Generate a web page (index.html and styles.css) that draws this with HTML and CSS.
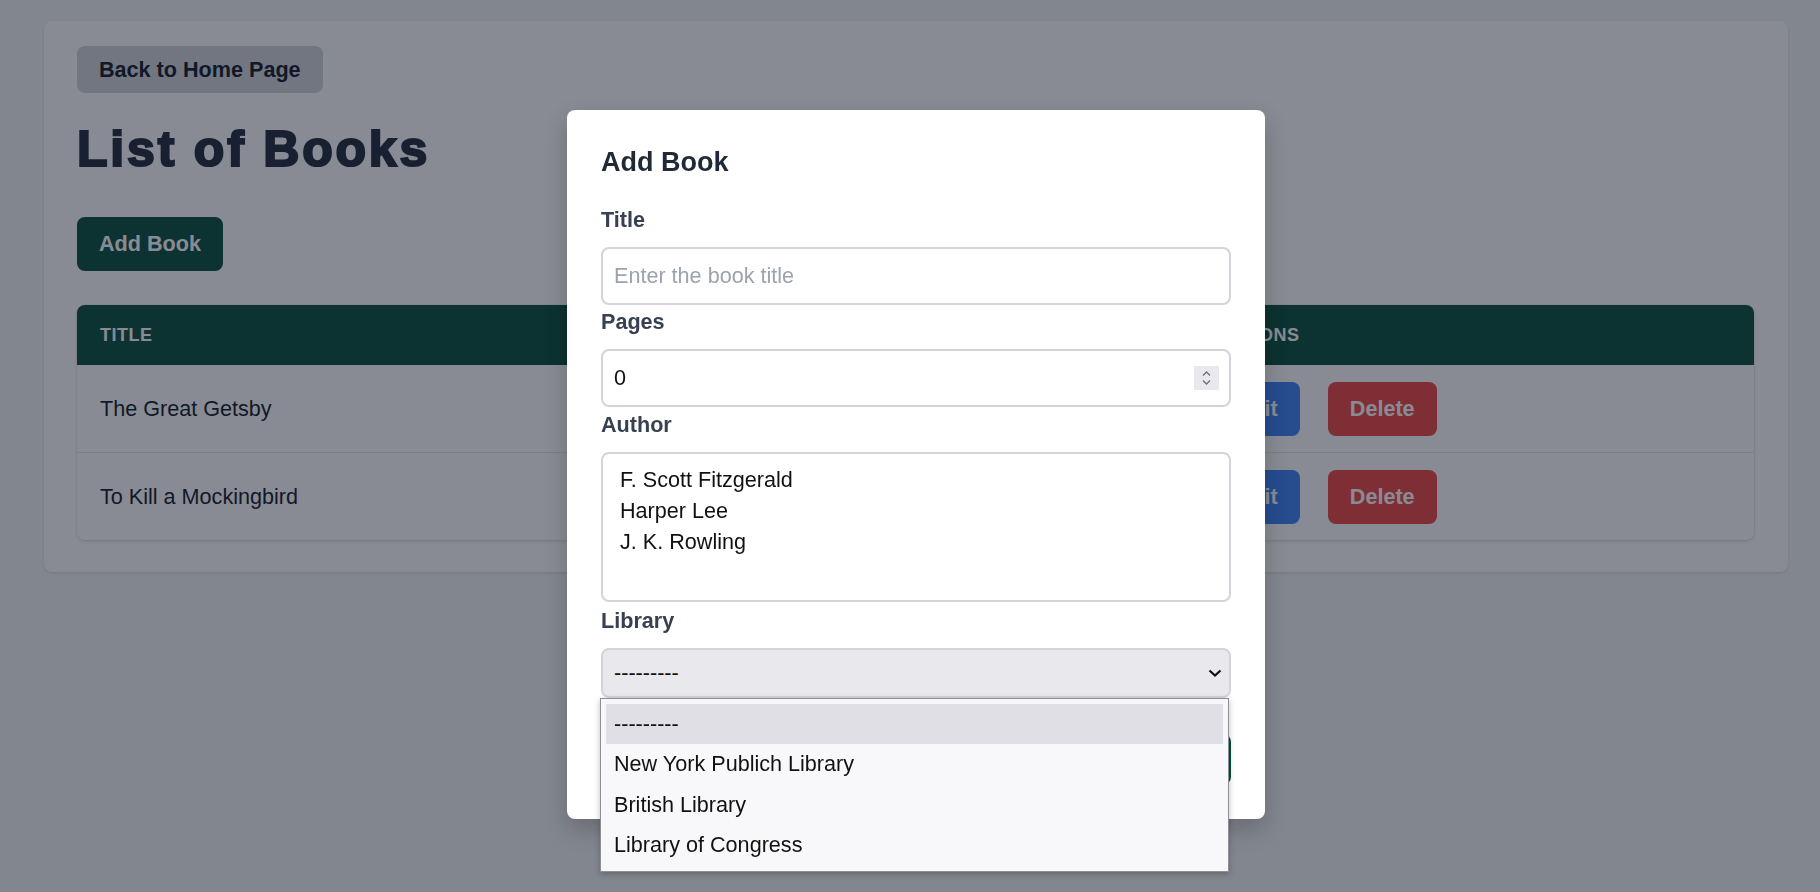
FILE: index.html
```html
<!DOCTYPE html>
<html lang="en">
<head>
<meta charset="utf-8">
<title>List of Books</title>
<link rel="stylesheet" href="styles.css">
</head>
<body>
<main class="page">
  <section class="card">
    <a class="btn btn-back" href="#">Back to Home Page</a>
    <h1 class="page-title">List of Books</h1>
    <button class="btn btn-add" type="button">Add Book</button>
    <div class="table-wrap">
      <table class="books">
        <colgroup>
          <col class="col-title"><col class="col-mid"><col>
        </colgroup>
        <thead>
          <tr><th>Title</th><th></th><th>Actions</th></tr>
        </thead>
        <tbody>
          <tr>
            <td>The Great Getsby</td><td></td>
            <td><div class="actions"><button class="btn btn-edit" type="button">Edit</button><button class="btn btn-delete" type="button">Delete</button></div></td>
          </tr>
          <tr>
            <td>To Kill a Mockingbird</td><td></td>
            <td><div class="actions"><button class="btn btn-edit" type="button">Edit</button><button class="btn btn-delete" type="button">Delete</button></div></td>
          </tr>
        </tbody>
      </table>
    </div>
  </section>
</main>

<div class="overlay">
  <div class="modal">
    <h2 class="modal-title">Add Book</h2>
    <form class="form">
      <label class="label" for="title">Title</label>
      <input class="input" id="title" type="text" placeholder="Enter the book title">

      <label class="label" for="pages">Pages</label>
      <div class="input input-number">
        <input class="number-field" id="pages" type="text" value="0">
        <span class="spinner">
          <svg width="25" height="24" viewBox="0 0 25 24"><polyline points="9,9.5 12.5,6 16,9.5" fill="none" stroke="#6b6f78" stroke-width="1.3"/><polyline points="9,14.5 12.5,18 16,14.5" fill="none" stroke="#6b6f78" stroke-width="1.3"/></svg>
        </span>
      </div>

      <label class="label">Author</label>
      <div class="listbox" role="listbox">
        <div class="listbox-option" role="option">F. Scott Fitzgerald</div>
        <div class="listbox-option" role="option">Harper Lee</div>
        <div class="listbox-option" role="option">J. K. Rowling</div>
      </div>

      <label class="label">Library</label>
      <div class="select-wrap">
        <div class="select">
          <span>---------</span>
          <svg width="14" height="8" viewBox="0 0 14 8"><polyline points="1.5,1.5 7,6.5 12.5,1.5" fill="none" stroke="#111" stroke-width="2.2"/></svg>
        </div>
        <ul class="dropdown" role="listbox">
          <li class="dropdown-option is-active">---------</li>
          <li class="dropdown-option">New York Publich Library</li>
          <li class="dropdown-option">British Library</li>
          <li class="dropdown-option">Library of Congress</li>
        </ul>
      </div>

      <button class="btn btn-submit" type="button"></button>
    </form>
  </div>
</div>
</body>
</html>
```

FILE: styles.css
```css
* { box-sizing: border-box; }

html, body { margin: 0; height: 100%; }

body {
  background: #f3f4f6;
  font-family: "Liberation Sans", Arial, sans-serif;
  font-size: 21.6px;
  color: #111827;
  padding: 21px 32px 0 44px;
}

.card {
  background: #fff;
  border-radius: 8px;
  box-shadow: 0 1px 3px rgba(0, 0, 0, 0.1);
  padding: 25px 34px 32px 33px;
  display: flex;
  flex-direction: column;
  align-items: flex-start;
}

.btn {
  display: inline-block;
  border: 0;
  border-radius: 8px;
  font: 700 21.6px/27px "Liberation Sans", Arial, sans-serif;
  padding: 10px 22px;
  text-decoration: none;
  cursor: pointer;
  color: #fff;
}

.btn-back { background: #d1d5db; color: #111827; }

.page-title {
  font-size: 50px;
  line-height: 60px;
  font-weight: 700;
  letter-spacing: 2.8px;
  color: #1e293b;
  -webkit-text-stroke: 2.2px #1e293b;
  margin: 26px 0 38px;
}

.btn-add {
  background: #064e3b;
  padding: 13px 22px;
  line-height: 28px;
}

.table-wrap {
  align-self: stretch;
  margin-top: 34px;
  border-radius: 8px;
  overflow: hidden;
  background: #fff;
  box-shadow: 0 0 0 1px rgba(0, 0, 0, 0.04), 0 2px 4px rgba(0, 0, 0, 0.1);
}

.books {
  width: 100%;
  border-collapse: collapse;
  table-layout: fixed;
}

.col-title { width: 500px; }
.col-mid { width: 615px; }

.books th {
  background: #064e3b;
  color: #fff;
  text-align: left;
  font-size: 18px;
  font-weight: 700;
  letter-spacing: 0.5px;
  text-transform: uppercase;
  height: 60px;
  padding: 0 23px;
}

.books td {
  padding: 17px 23px 16px;
  vertical-align: middle;
  color: #111827;
}

.books tbody tr + tr td { border-top: 1px solid #e5e7eb; }

.actions { display: flex; gap: 28px; }

.btn-edit, .btn-delete { padding: 13px 22px; line-height: 28px; }
.btn-edit { background: #3b82f6; }
.btn-delete { background: #ef4444; }

/* modal */
.overlay {
  position: fixed;
  inset: 0;
  background: rgba(17, 24, 39, 0.5);
  display: flex;
  justify-content: center;
  align-items: flex-start;
  padding: 110px 0 0 12px;
}

.modal {
  width: 698px;
  background: #fff;
  border-radius: 8px;
  padding: 36px 34px 34px;
  box-shadow: 0 10px 25px rgba(0, 0, 0, 0.2);
}

.modal-title {
  margin: 0 0 28.5px;
  font-size: 27px;
  line-height: 32px;
  font-weight: 700;
  color: #1f2937;
}

.form { display: flex; flex-direction: column; }

.label {
  display: block;
  font-weight: 700;
  font-size: 21.6px;
  line-height: 25px;
  color: #374151;
  margin-bottom: 15px;
}

.input {
  display: block;
  width: 100%;
  height: 58px;
  border: 2px solid #d1d5db;
  border-radius: 8px;
  padding: 0 11px;
  font: 400 21.6px "Liberation Sans", Arial, sans-serif;
  color: #111;
  background: #fff;
  margin: 0 0 4.5px;
}

.input::placeholder { color: #9ca3af; }

.input-number {
  display: flex;
  align-items: center;
  padding: 0 10px 0 11px;
}

.number-field {
  flex: 1;
  border: 0;
  outline: 0;
  padding: 0;
  font: inherit;
  color: #111;
  background: transparent;
}

.spinner {
  display: flex;
  width: 25px;
  height: 24px;
  background: #e9e9ed;
}

.listbox {
  height: 150px;
  border: 2px solid #d1d5db;
  border-radius: 8px;
  padding: 10px 17px;
  margin-bottom: 6px;
}

.listbox-option {
  line-height: 31.3px;
  color: #111;
}

.select-wrap {
  position: relative;
  margin-bottom: 36px;
}

.select {
  display: flex;
  align-items: center;
  justify-content: space-between;
  height: 50px;
  background: #e9e9ed;
  border: 2px solid #d4d4d8;
  border-radius: 8px;
  padding: 0 7px 0 11px;
  color: #111;
}

.dropdown {
  position: absolute;
  top: 100%;
  left: -1px;
  width: 629px;
  margin: 0;
  padding: 5px;
  list-style: none;
  background: #f8f8fa;
  border: 1px solid #8e8e94;
  box-shadow: 0 2px 6px rgba(0, 0, 0, 0.25);
  z-index: 2;
}

.dropdown-option {
  height: 40.5px;
  line-height: 40.5px;
  padding: 0 8px;
  color: #111;
}

.dropdown-option.is-active { background: #dfdfe5; }

.btn-submit {
  display: block;
  width: 100%;
  height: 51px;
  background: #064e3b;
}
```
